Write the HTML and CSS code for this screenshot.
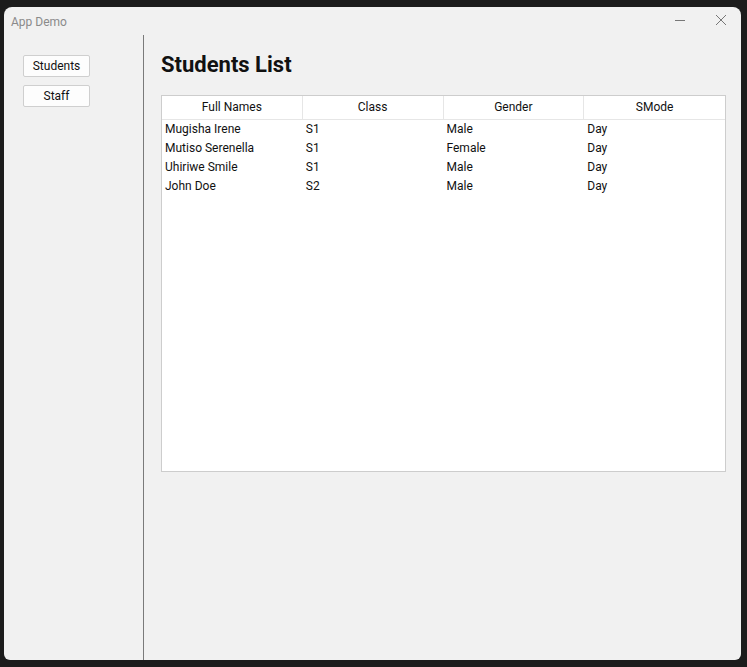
FILE: index.html
```html
<!DOCTYPE html>
<html>
<head>
<meta charset="utf-8">
<link rel="stylesheet" href="styles.css">
</head>
<body>
<div class="window">
  <div class="titlebar">
    <span class="title">App Demo</span>
    <div class="controls">
      <svg class="ctl" width="12" height="12" viewBox="0 0 12 12"><path d="M1 6.5H11" stroke="#777" stroke-width="1"/></svg>
      <svg class="ctl" width="12" height="12" viewBox="0 0 12 12"><path d="M1 1L11 11M11 1L1 11" stroke="#777" stroke-width="1"/></svg>
    </div>
  </div>
  <div class="body">
    <aside class="sidebar">
      <button class="btn">Students</button>
      <button class="btn">Staff</button>
    </aside>
    <main class="main">
      <h1 class="heading">Students List</h1>
      <div class="table">
        <div class="thead">
          <div class="th">Full Names</div>
          <div class="th">Class</div>
          <div class="th">Gender</div>
          <div class="th">SMode</div>
        </div>
        <div class="tbody">
          <div class="tr"><div class="td">Mugisha Irene</div><div class="td">S1</div><div class="td">Male</div><div class="td">Day</div></div>
          <div class="tr"><div class="td">Mutiso Serenella</div><div class="td">S1</div><div class="td">Female</div><div class="td">Day</div></div>
          <div class="tr"><div class="td">Uhiriwe Smile</div><div class="td">S1</div><div class="td">Male</div><div class="td">Day</div></div>
          <div class="tr"><div class="td">John Doe</div><div class="td">S2</div><div class="td">Male</div><div class="td">Day</div></div>
        </div>
      </div>
    </main>
  </div>
</div>
</body>
</html>
```

FILE: styles.css
```css
html, body {
  margin: 0;
  padding: 0;
}
body {
  background: #1c1c1c;
  width: 747px;
  height: 667px;
  overflow: hidden;
  font-family: Roboto, "Liberation Sans", sans-serif;
  color: #111;
}
.window {
  margin: 7px 0 0 4px;
  width: 737px;
  height: 653px;
  background: #f1f1f1;
  border-radius: 8px 8px 6px 6px;
  display: flex;
  flex-direction: column;
  overflow: hidden;
}
.titlebar {
  height: 28px;
  display: flex;
  align-items: center;
  justify-content: space-between;
  flex: none;
}
.title {
  font-size: 12px;
  color: #8a8a8a;
  padding-left: 7px;
  margin-top: 1px;
}
.controls {
  display: flex;
  gap: 29px;
  padding-right: 14px;
  margin-top: -2px;
}
.ctl {
  display: block;
}
.body {
  flex: 1;
  display: flex;
}
.sidebar {
  width: 140px;
  border-right: 1px solid #7a7a7a;
  padding: 20px 0 0 19px;
  box-sizing: border-box;
  display: flex;
  flex-direction: column;
  gap: 8px;
}
.btn {
  width: 67px;
  height: 22px;
  background: #fdfdfd;
  border: 1px solid #cfcfcf;
  border-radius: 2px;
  font-family: Roboto, "Liberation Sans", sans-serif;
  font-size: 12px;
  color: #111;
  padding: 0;
}
.main {
  flex: 1;
  padding: 0 15px 0 17px;
}
.heading {
  margin: 17px 0 0 0;
  font-size: 22px;
  line-height: 26px;
  font-weight: 700;
  color: #111;
}
.table {
  margin-top: 17px;
  height: 377px;
  background: #fff;
  border: 1px solid #cdcdcd;
  box-sizing: border-box;
  font-size: 12px;
}
.thead {
  display: grid;
  grid-template-columns: repeat(4, 1fr);
  height: 23px;
  border-bottom: 1px solid #e6e6e6;
}
.th {
  text-align: center;
  line-height: 22px;
  border-right: 1px solid #e6e6e6;
}
.th:last-child {
  border-right: none;
}
.tr {
  display: grid;
  grid-template-columns: repeat(4, 1fr);
  height: 19px;
  line-height: 19px;
}
.td {
  padding-left: 3px;
}
```
